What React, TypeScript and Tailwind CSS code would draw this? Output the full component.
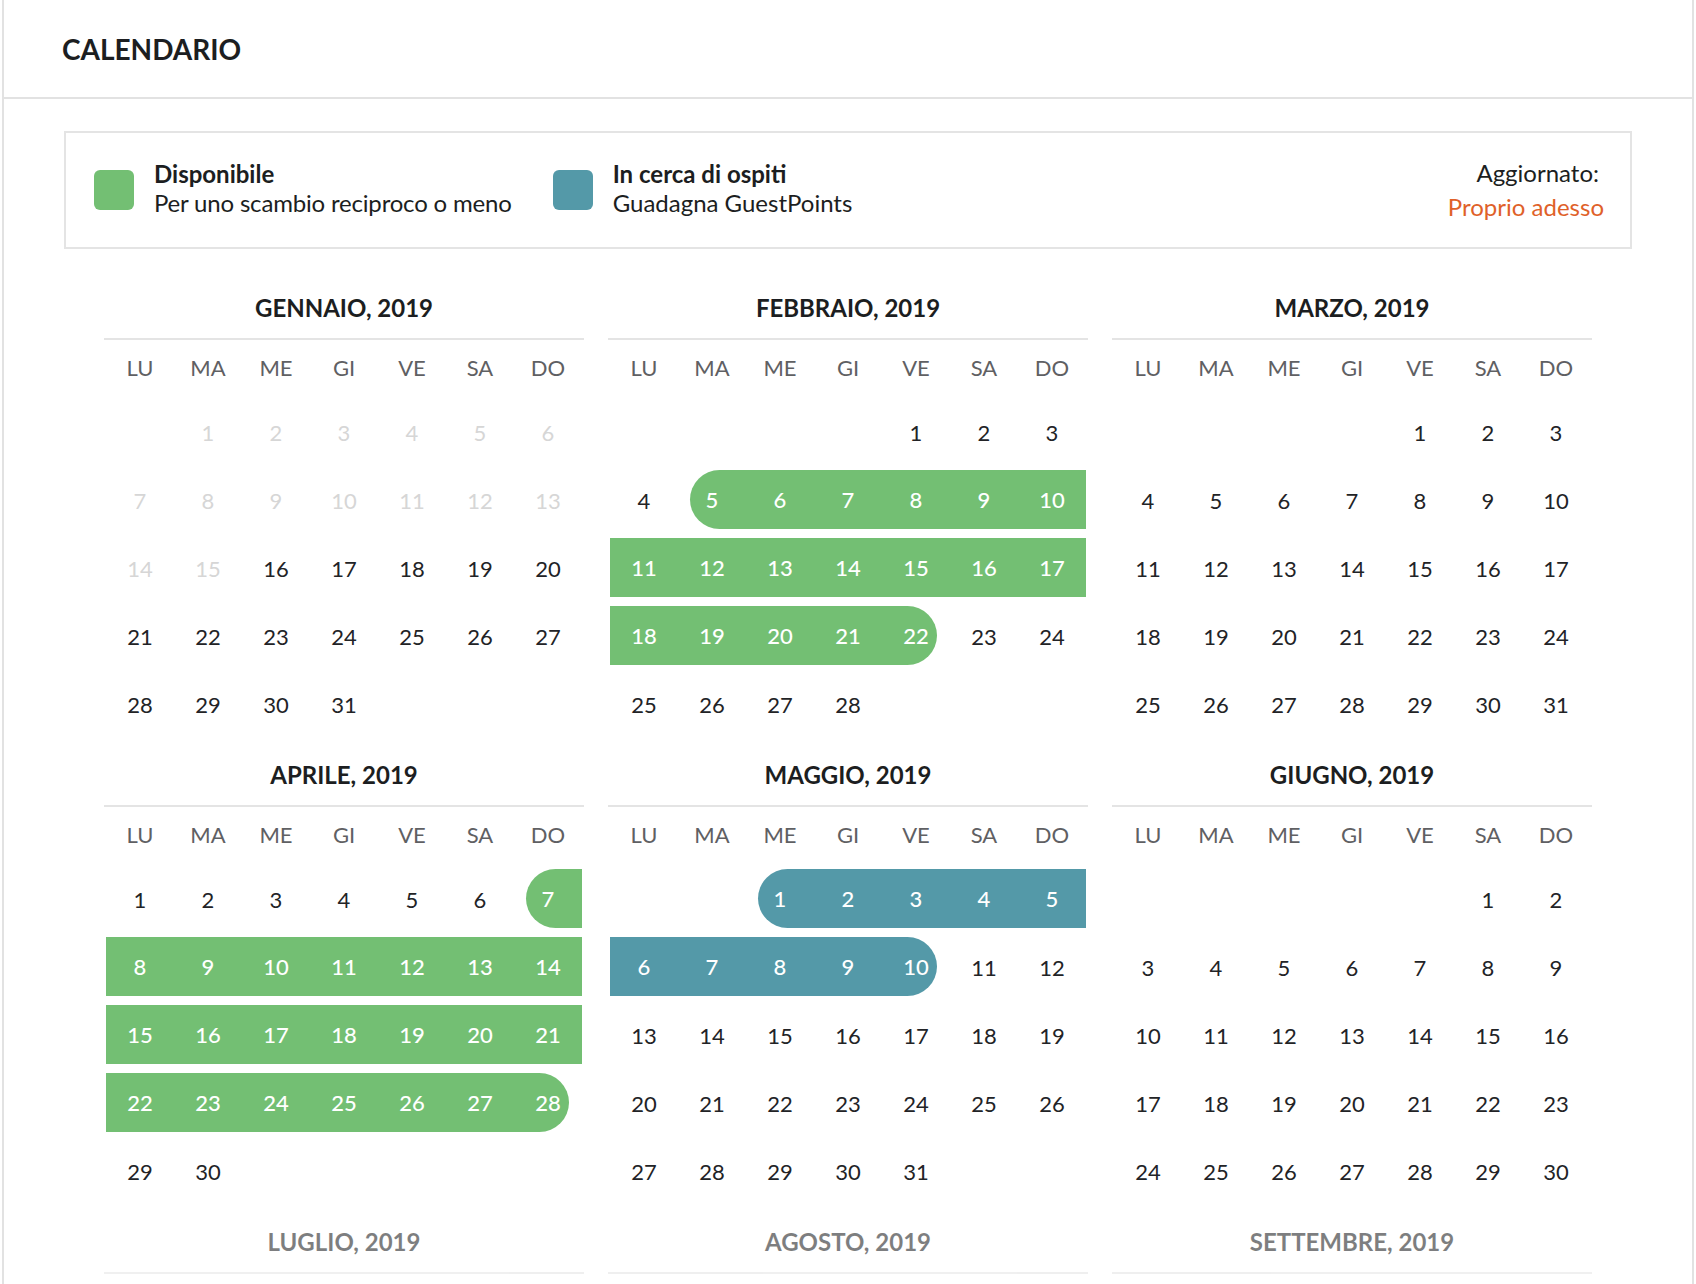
import React from "react";

type Range = { start: number; end: number; color: string };
type Month = { name: string; m: number; ranges: Range[]; pastBefore?: number };

const GREEN = "bg-[#73bf73]";
const BLUE = "bg-[#5499a8]";

const WEEK = ["LU", "MA", "ME", "GI", "VE", "SA", "DO"];

const MONTHS: Month[] = [
  { name: "GENNAIO, 2019", m: 0, ranges: [], pastBefore: 16 },
  { name: "FEBBRAIO, 2019", m: 1, ranges: [{ start: 5, end: 22, color: GREEN }] },
  { name: "MARZO, 2019", m: 2, ranges: [] },
  { name: "APRILE, 2019", m: 3, ranges: [{ start: 7, end: 28, color: GREEN }] },
  { name: "MAGGIO, 2019", m: 4, ranges: [{ start: 1, end: 10, color: BLUE }] },
  { name: "GIUGNO, 2019", m: 5, ranges: [] },
];

const NEXT: Month[] = [
  { name: "LUGLIO, 2019", m: 6, ranges: [] },
  { name: "AGOSTO, 2019", m: 7, ranges: [] },
  { name: "SETTEMBRE, 2019", m: 8, ranges: [] },
];

function DayCell({ day, month }: { day: number; month: Month }) {
  const r = month.ranges.find((x) => day >= x.start && day <= x.end);
  if (!r) {
    const past = month.pastBefore !== undefined && day < month.pastBefore;
    return (
      <div className={`h-[68px] flex items-center justify-center ${past ? "text-[#d6d6d6]" : "text-[#222326]"}`}>
        {day}
      </div>
    );
  }
  const isStart = day === r.start;
  const isEnd = day === r.end;
  const cls = [
    "h-[59px] flex items-center justify-center text-white font-medium",
    r.color,
    isStart ? "ml-[12px] pr-[12px] rounded-l-full" : "",
    isEnd ? "mr-[13px] pl-[13px] rounded-r-full" : "",
  ].join(" ");
  return (
    <div className="h-[68px] pt-[4px]">
      <div className={cls}>{day}</div>
    </div>
  );
}

function MonthBlock({ month, headerOnly }: { month: Month; headerOnly?: boolean }) {
  const first = (new Date(2019, month.m, 1).getDay() + 6) % 7;
  const days = new Date(2019, month.m + 1, 0).getDate();
  const cells: (number | null)[] = [];
  for (let i = 0; i < first; i++) cells.push(null);
  for (let d = 1; d <= days; d++) cells.push(d);
  return (
    <div>
      <div className="h-[43px] pt-[3px] leading-[40px] text-center text-[24px] font-bold text-[#1c1e21]">{month.name}</div>
      <div className="mt-[10px] h-[2px] bg-[#e4e4e4]" />
      {!headerOnly && (
        <>
          <div className="grid grid-cols-7 px-[2px] h-[58px]">
            {WEEK.map((w) => (
              <div key={w} className="text-center leading-[55px] text-[#5f6063]">
                {w}
              </div>
            ))}
          </div>
          <div className="grid grid-cols-7 px-[2px]">
            {cells.map((d, i) =>
              d === null ? <div key={i} className="h-[68px]" /> : <DayCell key={i} day={d} month={month} />
            )}
          </div>
        </>
      )}
    </div>
  );
}

export default function App() {
  return (
    <div className="h-screen overflow-hidden bg-white px-[2px] font-['Lato',sans-serif]">
      <div className="min-h-full border-x-2 border-[#e2e2e2]">
        <div className="h-[99px] border-b-2 border-[#e2e2e2] flex items-center pl-[58px]">
          <h1 className="text-[28px] font-bold text-[#1c1e21]">CALENDARIO</h1>
        </div>
        <div className="px-[60px] pt-[32px]">
          <div className="h-[118px] border-2 border-[#e4e4e4] flex items-center pl-[28px] pr-[26px] text-[24px] text-[#1c1e21]">
            <div className="flex items-center gap-[20px]">
              <div className={`w-[40px] h-[40px] rounded-[6px] ${GREEN}`} />
              <div className="leading-[29px] mb-[4px]">
                <div className="font-bold">Disponibile</div>
                <div className="tracking-[-0.18px]">Per uno scambio reciproco o meno</div>
              </div>
            </div>
            <div className="flex items-center gap-[20px] ml-[41px]">
              <div className={`w-[40px] h-[40px] rounded-[6px] ${BLUE}`} />
              <div className="leading-[29px] mb-[4px]">
                <div className="font-bold">In cerca di ospiti</div>
                <div>Guadagna GuestPoints</div>
              </div>
            </div>
            <div className="ml-auto text-right leading-[34px]">
              <div className="mr-[5px]">Aggiornato:</div>
              <div className="text-[#df6129]">Proprio adesso</div>
            </div>
          </div>
          <div className="px-[40px] pt-[36px] text-[22px]">
            <div className="grid grid-cols-3 gap-x-[24px] gap-y-[14px]">
              {MONTHS.map((m) => (
                <MonthBlock key={m.name} month={m} />
              ))}
            </div>
            <div className="grid grid-cols-3 gap-x-[24px] mt-[14px] opacity-[0.57]">
              {NEXT.map((m) => (
                <MonthBlock key={m.name} month={m} headerOnly />
              ))}
            </div>
          </div>
        </div>
      </div>
    </div>
  );
}
